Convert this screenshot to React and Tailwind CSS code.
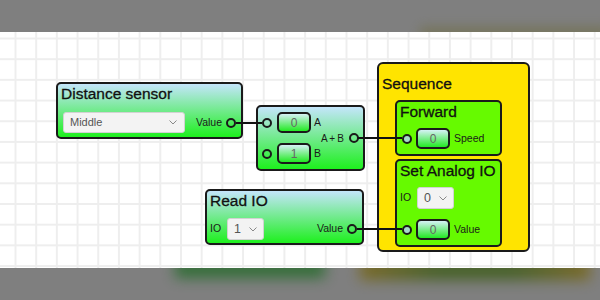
import React from "react";

function Port({ filled }) {
  return (
    <div
      className={
        filled
          ? "w-[10px] h-[10px] rounded-full border-2 border-[#1a1a1a] shrink-0 bg-[#a6dcc8]"
          : "w-[10px] h-[10px] rounded-full border-2 border-[#1a1a1a] shrink-0 bg-transparent"
      }
    />
  );
}

function Box({ value }) {
  return (
    <div className="w-[34px] h-[21px] rounded-[5px] border-2 border-[#1a1a1a] bg-[linear-gradient(#d6f2f6,#22ea22)] flex items-center justify-center text-[12px] text-[#666] shrink-0">
      {value}
    </div>
  );
}

function Chevron() {
  return (
    <svg width="8" height="5" viewBox="0 0 8 5" className="shrink-0">
      <polyline points="0.5,0.5 4,4 7.5,0.5" fill="none" stroke="#888" strokeWidth="1" />
    </svg>
  );
}

function Select({ value, wide }) {
  return (
    <div
      className={
        wide
          ? "w-[122px] h-[21px] rounded-[3px] border border-[#d2d2d2] bg-[#f3f3f3] flex items-center justify-between pl-[6px] pr-[7px] text-[11px] text-[#555] shrink-0"
          : "w-[37px] h-[22px] rounded-[3px] border border-[#d2d2d2] bg-[#f3f3f3] flex items-center justify-between pl-[6px] pr-[6px] text-[12.5px] text-[#555] shrink-0"
      }
    >
      <span>{value}</span>
      <Chevron />
    </div>
  );
}

function Title({ children }) {
  return (
    <div className="pl-[3px] pt-[1px] text-[15.5px] leading-[18px] text-[#111] whitespace-nowrap [-webkit-text-stroke:0.3px_#111]">
      {children}
    </div>
  );
}

export default function App() {
  return (
    <div className="w-[600px] h-[300px] overflow-hidden font-['Liberation_Sans',Arial,sans-serif] text-[#1a1a1a]">
      {/* top overlay bar */}
      <div className="relative h-[32px] bg-[#7f7f7f] overflow-hidden">
        <div className="absolute left-[420px] top-[27px] w-[190px] h-[12px] bg-[#6f6c40] blur-[6px] opacity-60" />
      </div>

      {/* canvas */}
      <div className="relative h-[236px] bg-white bg-[linear-gradient(to_right,#eeeeee_2px,transparent_2px),linear-gradient(to_bottom,#eeeeee_2px,transparent_2px)] bg-[size:20.7px_20.7px] bg-[position:14.5px_5.5px]">
        {/* Distance sensor */}
        <div className="absolute left-[56px] top-[50px] w-[187px] h-[57px] rounded-[5px] border-2 border-[#1a1a1a] bg-[linear-gradient(#c4e5fb,#1ef01e)]">
          <Title>Distance sensor</Title>
          <div className="mt-[9px] flex items-center justify-between pl-[5px] pr-[5px]">
            <Select value="Middle" wide />
            <div className="flex items-center gap-[4px]">
              <span className="text-[10.5px]">Value</span>
              <Port />
            </div>
          </div>
        </div>

        {/* A + B */}
        <div className="absolute left-[256px] top-[73px] w-[109px] h-[66px] rounded-[5px] border-2 border-[#1a1a1a] bg-[linear-gradient(#c4e5fb,#1ef01e)] flex items-center justify-between pl-[4px] pr-[5px]">
          <div className="flex flex-col gap-[10px] shrink-0">
            <div className="flex items-center">
              <Port />
              <div className="ml-[5px]">
                <Box value="0" />
              </div>
              <span className="ml-[3px] text-[10.5px]">A</span>
            </div>
            <div className="flex items-center">
              <Port />
              <div className="ml-[5px]">
                <Box value="1" />
              </div>
              <span className="ml-[3px] text-[10.5px]">B</span>
            </div>
          </div>
          <div className="flex items-center gap-[5px] shrink-0">
            <span className="text-[10px] whitespace-nowrap tracking-[-0.3px]">A + B</span>
            <Port />
          </div>
        </div>

        {/* Read IO */}
        <div className="absolute left-[205px] top-[157px] w-[159px] h-[56px] rounded-[5px] border-2 border-[#1a1a1a] bg-[linear-gradient(#c4e5fb,#1ef01e)]">
          <Title>Read IO</Title>
          <div className="mt-[8px] flex items-center justify-between pl-[3px] pr-[5px]">
            <div className="flex items-center">
              <span className="text-[10.5px]">IO</span>
              <div className="ml-[6px]">
                <Select value="1" />
              </div>
            </div>
            <div className="flex items-center gap-[4px]">
              <span className="text-[10.5px]">Value</span>
              <Port />
            </div>
          </div>
        </div>

        {/* Sequence */}
        <div className="absolute left-[377px] top-[30px] w-[153px] h-[190px] rounded-[6px] border-2 border-[#1a1a1a] bg-[#ffe400]">
          <div className="pl-[3px] pt-[11px] text-[15.5px] leading-[18px] text-[#111] [-webkit-text-stroke:0.3px_#111]">Sequence</div>
          <div className="mt-[7px] pl-[16px] flex flex-col gap-[3px]">
            <div className="w-[107px] h-[56px] rounded-[5px] border-2 border-[#1a1a1a] bg-[#66fa00]">
              <Title>Forward</Title>
              <div className="mt-[7px] flex items-center pl-[5px]">
                <Port filled />
                <div className="ml-[4px]">
                  <Box value="0" />
                </div>
                <span className="ml-[4px] text-[10.5px]">Speed</span>
              </div>
            </div>
            <div className="w-[107px] h-[88px] rounded-[5px] border-2 border-[#1a1a1a] bg-[#66fa00]">
              <Title>Set Analog IO</Title>
              <div className="mt-[7px] flex items-center pl-[3px]">
                <span className="text-[10.5px]">IO</span>
                <div className="ml-[6px]">
                  <Select value="0" />
                </div>
              </div>
              <div className="mt-[10px] flex items-center pl-[5px]">
                <Port filled />
                <div className="ml-[4px]">
                  <Box value="0" />
                </div>
                <span className="ml-[4px] text-[10.5px]">Value</span>
              </div>
            </div>
          </div>
        </div>

        {/* wires */}
        <svg className="absolute left-0 top-0 pointer-events-none" width="600" height="236">
          <line x1="236" y1="91" x2="262" y2="91" stroke="#111" strokeWidth="2" />
          <line x1="358" y1="106" x2="402" y2="106" stroke="#111" strokeWidth="2" />
          <line x1="357" y1="197" x2="402" y2="197" stroke="#111" strokeWidth="2" />
        </svg>
      </div>

      {/* bottom overlay bar */}
      <div className="relative h-[32px] bg-[#7f7f7f] overflow-hidden">
        <div className="absolute left-[175px] top-[-8px] w-[150px] h-[18px] bg-[#1f6a25] blur-[7px] opacity-80" />
        <div className="absolute left-[360px] top-[-8px] w-[230px] h-[20px] bg-[linear-gradient(to_right,#7a6510,#3a5a12,#3a5a12,#7a6510)] blur-[7px] opacity-80" />
      </div>
    </div>
  );
}
